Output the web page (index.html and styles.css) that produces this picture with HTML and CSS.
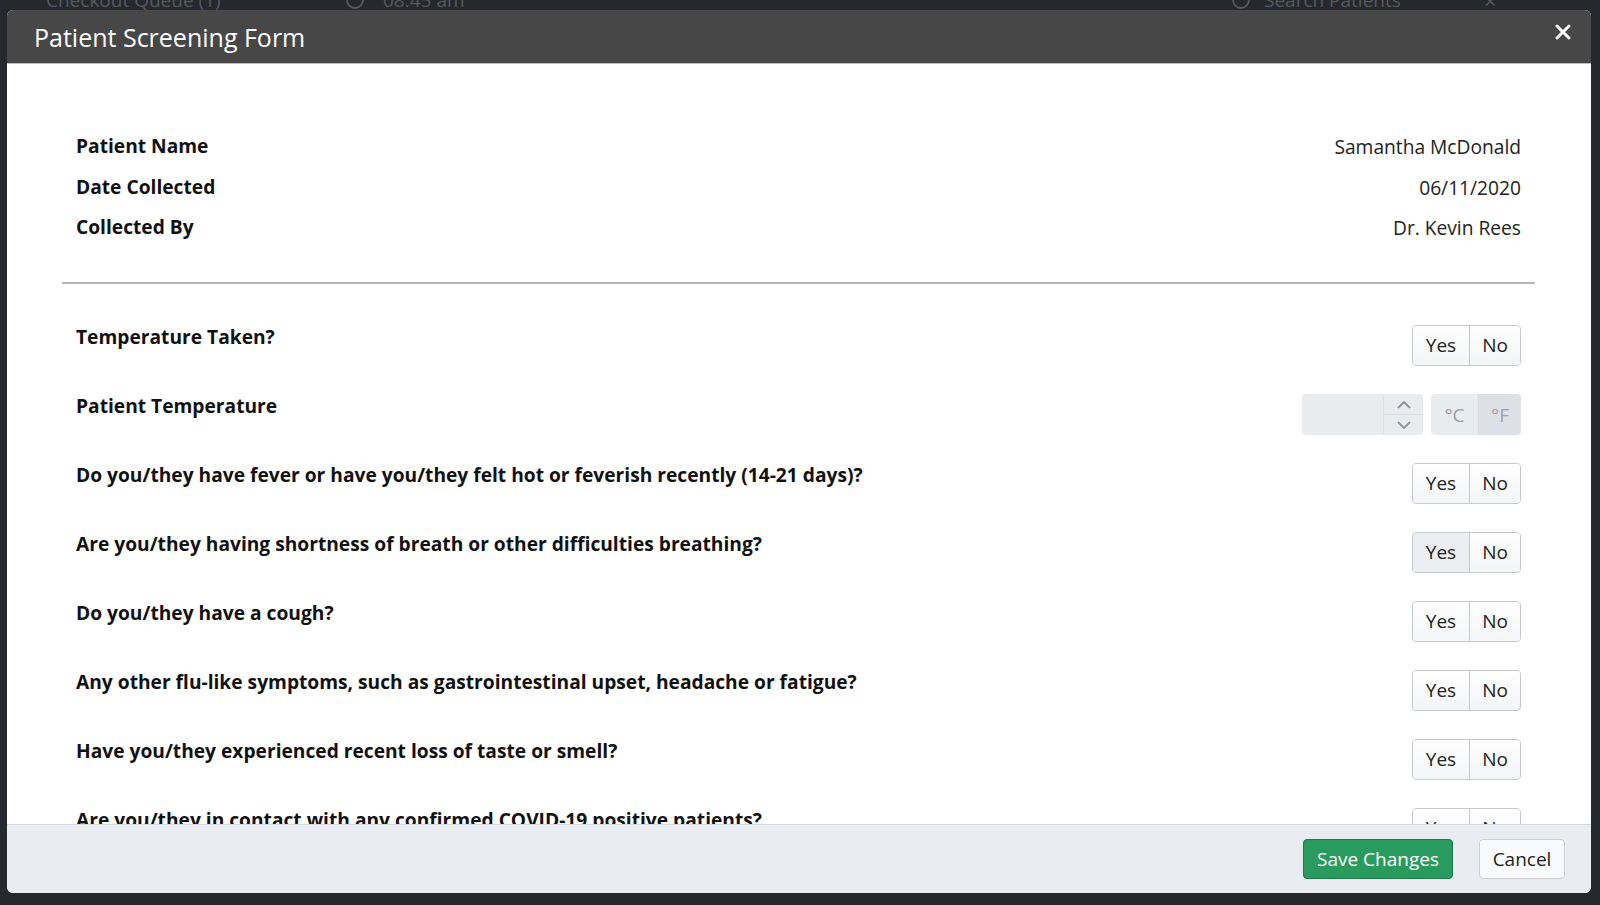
FILE: index.html
```html
<!DOCTYPE html>
<html lang="en">
<head>
<meta charset="utf-8">
<title>Patient Screening Form</title>
<link rel="stylesheet" href="styles.css">
</head>
<body>
<div class="backdrop">
  <div class="app-bar">
    <span class="app-item queue">Checkout Queue (1)</span>
    <span class="app-icon clock"></span>
    <span class="app-item time">08:45 am</span>
    <span class="spacer"></span>
    <span class="app-icon lens"></span>
    <span class="app-item search">Search Patients</span>
    <span class="app-item x">×</span>
  </div>
</div>

<div class="modal">
  <div class="modal-header">
    <h1 class="modal-title">Patient Screening Form</h1>
    <button class="close-btn" aria-label="Close">
      <svg width="16" height="16" viewBox="0 0 16 16"><path d="M2 2 L14 14 M14 2 L2 14" stroke="#fff" stroke-width="3" stroke-linecap="round"/></svg>
    </button>
  </div>

  <div class="modal-body">
    <div class="info">
      <div class="info-row"><span class="info-label">Patient Name</span><span class="info-value">Samantha McDonald</span></div>
      <div class="info-row"><span class="info-label">Date Collected</span><span class="info-value">06/11/2020</span></div>
      <div class="info-row"><span class="info-label">Collected By</span><span class="info-value">Dr. Kevin Rees</span></div>
    </div>
    <hr class="divider">
    <div class="questions">
      <div class="q-row">
        <span class="q-label">Temperature Taken?</span>
        <div class="yn"><button class="yn-btn yes">Yes</button><button class="yn-btn no">No</button></div>
      </div>
      <div class="q-row">
        <span class="q-label">Patient Temperature</span>
        <div class="temp">
          <div class="temp-input">
            <div class="temp-field"></div>
            <div class="spinner">
              <div class="spin-half"><svg width="14" height="9" viewBox="0 0 14 9"><path d="M1.5 7.5 L7 2 L12.5 7.5" fill="none" stroke="#8e959c" stroke-width="1.8" stroke-linecap="round" stroke-linejoin="round"/></svg></div>
              <div class="spin-half down"><svg width="14" height="9" viewBox="0 0 14 9"><path d="M1.5 1.5 L7 7 L12.5 1.5" fill="none" stroke="#8e959c" stroke-width="1.8" stroke-linecap="round" stroke-linejoin="round"/></svg></div>
            </div>
          </div>
          <div class="units"><span class="unit c">°C</span><span class="unit f">°F</span></div>
        </div>
      </div>
      <div class="q-row">
        <span class="q-label">Do you/they have fever or have you/they felt hot or feverish recently (14-21 days)?</span>
        <div class="yn"><button class="yn-btn yes">Yes</button><button class="yn-btn no">No</button></div>
      </div>
      <div class="q-row">
        <span class="q-label">Are you/they having shortness of breath or other difficulties breathing?</span>
        <div class="yn"><button class="yn-btn yes hover">Yes</button><button class="yn-btn no">No</button></div>
      </div>
      <div class="q-row">
        <span class="q-label">Do you/they have a cough?</span>
        <div class="yn"><button class="yn-btn yes">Yes</button><button class="yn-btn no">No</button></div>
      </div>
      <div class="q-row">
        <span class="q-label">Any other flu-like symptoms, such as gastrointestinal upset, headache or fatigue?</span>
        <div class="yn"><button class="yn-btn yes">Yes</button><button class="yn-btn no">No</button></div>
      </div>
      <div class="q-row">
        <span class="q-label">Have you/they experienced recent loss of taste or smell?</span>
        <div class="yn"><button class="yn-btn yes">Yes</button><button class="yn-btn no">No</button></div>
      </div>
      <div class="q-row">
        <span class="q-label">Are you/they in contact with any confirmed COVID-19 positive patients?</span>
        <div class="yn"><button class="yn-btn yes">Yes</button><button class="yn-btn no">No</button></div>
      </div>
    </div>
  </div>

  <div class="modal-footer">
    <button class="btn btn-save">Save Changes</button>
    <button class="btn btn-cancel">Cancel</button>
  </div>
</div>
</body>
</html>
```

FILE: styles.css
```css
* { box-sizing: border-box; }
html, body { margin: 0; padding: 0; }
body {
  width: 1600px;
  height: 905px;
  overflow: hidden;
  background: #25282c;
  font-family: "Open Sans", "Noto Sans", "Liberation Sans", sans-serif;
}
.backdrop { height: 905px; }
.app-bar {
  display: flex;
  align-items: center;
  height: 28px;
  margin-top: -14px;
  padding: 0 0 0 46px;
  color: #55595e;
  font-size: 19px;
}
.app-item { white-space: nowrap; }
.queue { width: 300px; }
.app-icon {
  width: 18px;
  height: 18px;
  border: 2px solid #55595e;
  border-radius: 50%;
  margin-right: 12px;
}
.clock { margin-right: 19px; }
.lens { margin-right: 14px; }
.spacer { flex: 1; }
.search { width: 220px; }
.x { width: 116px; font-size: 22px; }

.modal {
  position: fixed;
  left: 7px;
  top: 10px;
  width: 1584px;
  height: 883px;
  background: #fff;
  border-radius: 6px;
  overflow: hidden;
  display: flex;
  flex-direction: column;
}
.modal-header {
  flex: none;
  height: 54px;
  background: #474747;
  border-bottom: 1px solid #bdbdbd;
  display: flex;
  align-items: center;
  justify-content: space-between;
  padding: 0 12px 0 27px;
}
.modal-title {
  margin: 0;
  color: #fff;
  font-weight: 400;
  font-size: 25px;
  line-height: 30px;
}
.close-btn {
  background: none;
  border: 0;
  padding: 0;
  width: 32px;
  height: 32px;
  margin-top: -9px;
  display: flex;
  align-items: center;
  justify-content: center;
  cursor: pointer;
}

.modal-body {
  flex: 1;
  overflow: hidden;
  padding: 61px 56px 0 55px;
}
.info-row {
  display: flex;
  justify-content: space-between;
  align-items: center;
  height: 40.7px;
  padding: 0 14px;
  line-height: 27px;
  font-size: 19.2px;
}
.info-label { font-weight: 700; color: #111; }
.info-value { color: #222; padding-top: 2px; }
.divider {
  border: 0;
  border-top: 2px solid #b5b5b5;
  margin: 35px 0 0 0;
}
.questions { margin-top: 27px; }
.q-row {
  display: flex;
  justify-content: space-between;
  align-items: flex-start;
  padding: 14px 14px;
  height: 69px;
}
.q-label {
  font-weight: 700;
  font-size: 19.2px;
  line-height: 27px;
  color: #111;
  margin-top: -2px;
}
.yn {
  display: flex;
  height: 41px;
  border: 1px solid #c6cacf;
  border-radius: 4px;
  overflow: hidden;
  background: #f8f9fa;
}
.yn-btn {
  font-family: inherit;
  font-size: 19px;
  color: #222;
  background: linear-gradient(#ffffff, #f4f5f7);
  border: 0;
  padding: 0;
  height: 39px;
  line-height: 39px;
  text-align: center;
}
.yn-btn.yes { width: 56px; }
.yn-btn.no { width: 51px; border-left: 1px solid #c6cacf; }
.yn-btn.hover { background: #eceef1; }

.temp { display: flex; gap: 8px; }
.temp-input {
  display: flex;
  width: 121px;
  height: 41px;
  background: #e9ecef;
  border-radius: 4px;
  overflow: hidden;
}
.temp-field { flex: 1; }
.spinner {
  width: 40px;
  display: flex;
  flex-direction: column;
  border-left: 1px solid #dde1e5;
}
.spin-half {
  flex: 1;
  display: flex;
  align-items: center;
  justify-content: center;
}
.spin-half.down { border-top: 1px solid #dde1e5; }
.units {
  display: flex;
  height: 41px;
  border-radius: 4px;
  overflow: hidden;
}
.unit {
  display: flex;
  align-items: center;
  justify-content: center;
  font-size: 19px;
  color: #9ba1a8;
}
.unit.c { width: 47px; background: #e9ecef; }
.unit.f { width: 43px; background: #dde1e5; border-left: 1px solid #d6dadf; }

.modal-footer {
  flex: none;
  height: 69px;
  background: #e9edf1;
  border-top: 1px solid #d3d8dd;
  display: flex;
  align-items: center;
  justify-content: flex-end;
  gap: 26px;
  padding: 0 26px 1px 0;
}
.btn {
  font-family: inherit;
  font-size: 19px;
  height: 40px;
  border-radius: 4px;
  padding: 0 12px;
  cursor: pointer;
}
.btn-save {
  background: #2a9b5e;
  border: 1px solid #1d7a47;
  color: #fff;
  width: 150px;
}
.btn-cancel {
  background: #f9fafb;
  border: 1px solid #cdd1d6;
  color: #222;
  width: 86px;
}
```
